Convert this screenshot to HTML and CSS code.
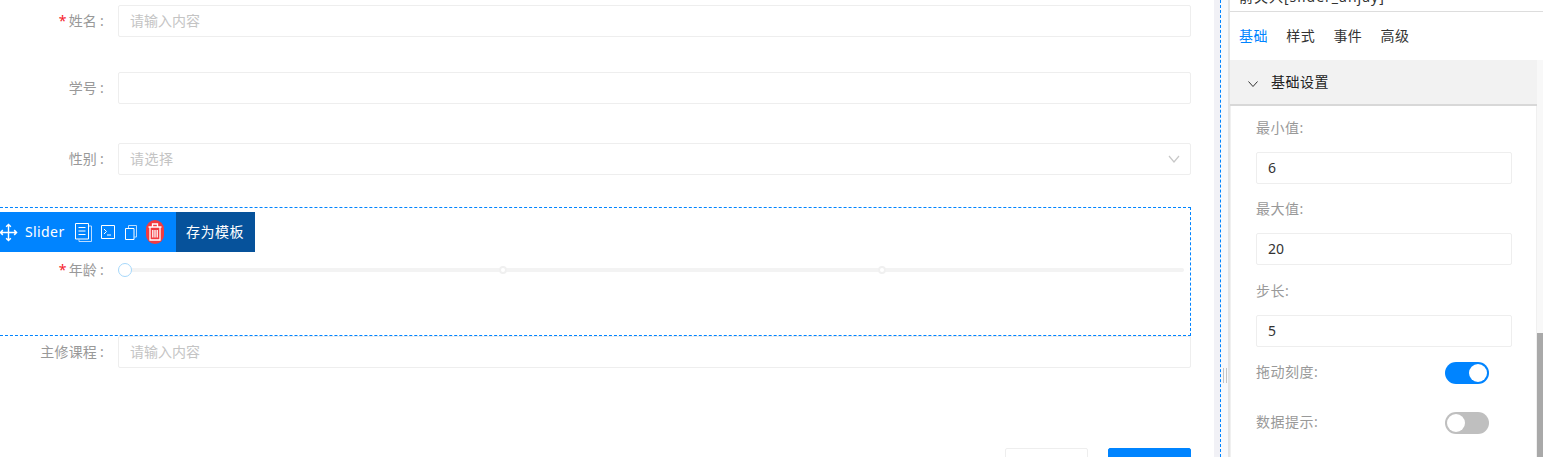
FILE: index.html
```html
<!DOCTYPE html>
<html lang="zh-CN">
<head>
  <meta charset="UTF-8" />
  <title>表单设计</title>
  <link rel="stylesheet" href="styles.css">
</head>
<body>

  <!-- Form canvas -->
  <div class="canvas">
    <div class="row row-name">
      <label class="label"><span class="star">*</span>姓名<span class="colon">:</span></label>
      <input class="input" placeholder="请输入内容">
    </div>
    <div class="row row-number">
      <label class="label">学号<span class="colon">:</span></label>
      <input class="input">
    </div>
    <div class="row row-gender">
      <label class="label">性别<span class="colon">:</span></label>
      <div class="select">
        <span>请选择</span>
        <svg class="chevron" width="12" height="8" viewBox="0 0 12 8"><path d="M1 1l5 6 5-6" fill="none" stroke="#c8c8c8" stroke-width="1.2"/></svg>
      </div>
    </div>

    <div class="selected">
      <div class="toolbar">
        <div class="tools">
          <svg class="tool-move" width="19" height="19" viewBox="0 0 20 20" fill="none" stroke="#fff" stroke-width="1.5">
            <path d="M10 1.5v17M1.5 10h17M7.500 4L10 1.500 12.500 4M7.500 16l2.500 2.500 2.500-2.500M4 7.500L1.500 10 4 12.500M16 7.500l2.500 2.500-2.500 2.500"/>
          </svg>
          <span class="tool-name">Slider</span>
          <svg class="tool-doc" width="17" height="19" viewBox="0 0 17 19" fill="none" stroke="#fff">
            <path d="M13.500 3h3v15.500H4v-2" stroke="#bcdcff"/>
            <path d="M.5.5h13v15.500H.5zM3.500 4.500h7M3.500 8h7M3.500 11.500h7"/>
          </svg>
          <svg class="tool-term" width="14" height="14" viewBox="0 0 14 14" fill="none" stroke="#fff">
            <path d="M.5.5h13v13H.5zM3 4l2.500 2.500L3 9M6 10h4"/>
          </svg>
          <svg class="tool-copy" width="12" height="15" viewBox="0 0 12 15" fill="none" stroke="#fff">
            <path d="M3.500 3V.5h8V12h-2" stroke="#bcdcff"/>
            <path d="M.5 3.500h8.500v11H.5z"/>
          </svg>
          <svg class="tool-trash" width="18" height="24" viewBox="0 0 18 24">
            <rect width="18" height="24" rx="9" fill="#f23b40"/>
            <path d="M2.500 7h13M6.500 7V4h5v3M4 7.500V20h10V7.500M6.800 10v7.500M9 10v7.500M11.200 10v7.500" fill="none" stroke="#fff" stroke-width="1.300"/>
          </svg>
        </div>
        <div class="save-tpl">存为模板</div>
      </div>
      <div class="row">
        <label class="label"><span class="star">*</span>年龄<span class="colon">:</span></label>
        <div class="slider">
          <div class="rail"></div>
          <span class="dot dot-one"></span>
          <span class="dot dot-two"></span>
          <span class="handle"></span>
        </div>
      </div>
    </div>

    <div class="row">
      <label class="label">主修课程<span class="colon">:</span></label>
      <input class="input" placeholder="请输入内容">
    </div>

    <div class="actions">
      <button class="btn"></button>
      <button class="btn btn-primary"></button>
    </div>
  </div>

  <!-- Drag gutter -->
  <div class="gutter">
    <div class="gutter-line">
      <span class="grip"></span>
    </div>
  </div>

  <!-- Settings panel -->
  <div class="panel">
    <div class="panel-title"><span>前关入[slider_anjay]</span></div>
    <div class="tabs">
      <span class="tab active">基础</span>
      <span class="tab">样式</span>
      <span class="tab">事件</span>
      <span class="tab">高级</span>
    </div>
    <div class="settings">
      <div class="settings-main">
        <div class="group-head">
          <svg width="10" height="6" viewBox="0 0 10 6"><path d="M.5.5L5 5.500 9.500.5" fill="none" stroke="#333" stroke-width="1"/></svg>
          <span>基础设置</span>
        </div>
        <div class="group-body">
          <div class="field">
            <div class="field-label">最小值:</div>
            <input class="field-input" value="6">
          </div>
          <div class="field">
            <div class="field-label">最大值:</div>
            <input class="field-input" value="20">
          </div>
          <div class="field field-step">
            <div class="field-label">步长:</div>
            <input class="field-input" value="5">
          </div>
          <div class="switch-row switch-row-first">
            <span class="field-label">拖动刻度:</span>
            <span class="switch on"></span>
          </div>
          <div class="switch-row">
            <span class="field-label">数据提示:</span>
            <span class="switch"></span>
          </div>
        </div>
      </div>
      <div class="scroll-track"><div class="scroll-thumb"></div></div>
    </div>
  </div>

</body>
</html>
```

FILE: styles.css
```css
* {
  box-sizing: border-box;
}
html, body {
  margin: 0;
  padding: 0;
  height: 457px;
  overflow: hidden;
  background-color: #fff;
  font-family: "Noto Sans", "Noto Sans CJK SC", sans-serif;
  font-size: 14px;
}
body {
  display: flex;
}

/* Form canvas */
.canvas {
  width: 1214px;
  height: 457px;
  flex: none;
  padding: 5px 23px 0 0;
  overflow: hidden;
}
.row {
  display: flex;
  align-items: center;
  height: 32px;
}
.row-name {
  margin-bottom: 35px;
}
.row-number {
  margin-bottom: 39px;
}
.row-gender {
  margin-bottom: 32px;
}
.label {
  width: 118px;
  flex: none;
  padding: 0 14px 2px 0;
  text-align: right;
  color: #999;
  letter-spacing: 0.2px;
}
.star {
  color: #f5222d;
  margin-right: 2px;
}
.colon {
  margin-left: 3px;
}
.input,
.select {
  flex: 1;
  height: 32px;
  min-width: 0;
  padding: 0 11px 2px;
  border: 1px solid #eee;
  border-radius: 2px;
  font: inherit;
  outline: none;
  background: #fff;
}
.input::placeholder {
  color: #c4c4c4;
}
.select {
  display: flex;
  align-items: center;
  justify-content: space-between;
  padding-bottom: 3px;
  color: #c4c4c4;
  letter-spacing: 0.5px;
}
.chevron {
  margin: 2px -1px 0 0;
}

/* Selected slider item */
.selected {
  position: relative;
  height: 129px;
  margin-left: -10px;
  padding: 46px 0 0 10px;
  border: 1px dashed #0084ff;
}
.selected .label {
  width: 117px;
}
.toolbar {
  position: absolute;
  top: 4px;
  left: -1px;
  display: flex;
  height: 40px;
  color: #fff;
}
.tools {
  display: flex;
  align-items: center;
  width: 186px;
  padding-left: 9px;
  background-color: #0084ff;
}
.tool-name {
  margin: 0 10px 2px 7px;
  letter-spacing: 0.4px;
}
.tool-term {
  margin-left: 9px;
}
.tool-copy {
  margin-left: 10px;
}
.tool-trash {
  margin-left: 9px;
}
.save-tpl {
  display: flex;
  align-items: center;
  padding: 0 11px 2px 10px;
  background-color: #06529b;
  letter-spacing: 0.5px;
}
.slider {
  position: relative;
  flex: 1;
  height: 32px;
  margin-right: 6px;
}
.rail {
  position: absolute;
  top: 14px;
  left: 0;
  right: 0;
  height: 4px;
  border-radius: 2px;
  background-color: #f3f3f3;
}
.dot,
.handle {
  position: absolute;
  border-radius: 50%;
  background-color: #fff;
}
.dot {
  top: 12px;
  width: 8px;
  height: 8px;
  border: 2px solid #f0f0f0;
}
.dot-one {
  left: 381px;
}
.dot-two {
  left: 760px;
}
.handle {
  top: 9px;
  left: 0;
  width: 14px;
  height: 14px;
  border: 1.5px solid #a6d8fb;
}

/* Form buttons */
.actions {
  display: flex;
  justify-content: flex-end;
  gap: 20px;
  height: 9px;
  margin-top: 80px;
  overflow: hidden;
}
.btn {
  width: 83px;
  height: 32px;
  flex: none;
  border: 1px solid #eee;
  border-radius: 2px;
  background-color: #fff;
}
.btn-primary {
  border-color: #0084ff;
  background-color: #0084ff;
}

/* Drag gutter */
.gutter {
  width: 16px;
  flex: none;
  padding-left: 6px;
  background-color: #f1f1f6;
}
.gutter-line {
  display: flex;
  align-items: flex-start;
  height: 100%;
  padding: 368px 0 0 2px;
  border-left: 1px dashed #0084ff;
  border-right: 2px solid #e4e4e4;
  background-color: #f8f9fc;
}
.grip {
  width: 4px;
  height: 15px;
  border-left: 1px solid #c4c4c4;
  border-right: 1px solid #c4c4c4;
}

/* Settings panel */
.panel {
  flex: 1;
  display: flex;
  flex-direction: column;
  min-width: 0;
  height: 457px;
}
.panel-title {
  display: flex;
  align-items: flex-end;
  flex: none;
  height: 12px;
  padding: 0 0 4px 9px;
  border-bottom: 1px solid #ddd;
  overflow: hidden;
  color: #333;
  line-height: 20px;
  letter-spacing: 1px;
  white-space: nowrap;
}
.tabs {
  display: flex;
  align-items: center;
  flex: none;
  gap: 18.2px;
  height: 48px;
  padding: 0 0 2px 9px;
}
.tab {
  color: #333;
  letter-spacing: 0.5px;
}
.tab.active {
  color: #0084ff;
}
.settings {
  display: flex;
  flex: 1;
  min-height: 0;
}
.settings-main {
  display: flex;
  flex-direction: column;
  flex: 1;
  min-width: 0;
}
.group-head {
  display: flex;
  align-items: center;
  flex: none;
  gap: 13px;
  height: 46px;
  padding: 0 0 2px 18px;
  border-bottom: 2px solid #d8d8d8;
  background-color: #f2f2f2;
  color: #222;
  letter-spacing: 0.5px;
}
.group-head svg {
  margin-top: 5px;
}
.group-body {
  flex: 1;
  min-height: 0;
  overflow: hidden;
  padding: 12px 0 0 25px;
  border-left: 1px solid #f0f0f0;
  border-right: 1px solid #f0f0f0;
}
.field {
  width: 256px;
  margin-bottom: 15px;
}
.field-step {
  margin-top: 16px;
}
.field-label {
  color: #999;
  line-height: 20px;
  letter-spacing: 0.5px;
}
.field-input {
  display: block;
  width: 100%;
  height: 32px;
  margin-top: 14px;
  padding: 0 11px 2px;
  border: 1px solid #eee;
  border-radius: 2px;
  font: inherit;
  color: #333;
  outline: none;
}
.switch-row {
  display: flex;
  align-items: center;
  justify-content: space-between;
  width: 233px;
  height: 22px;
  margin-bottom: 28px;
}
.switch-row .field-label {
  margin-bottom: 2px;
}
.switch-row-first {
  margin-top: 15px;
}
.switch {
  position: relative;
  width: 44px;
  height: 22px;
  border-radius: 11px;
  background-color: #bfbfbf;
}
.switch::after {
  content: "";
  position: absolute;
  top: 2px;
  left: 2px;
  width: 18px;
  height: 18px;
  border-radius: 50%;
  background-color: #fff;
}
.switch.on {
  background-color: #0084ff;
}
.switch.on::after {
  left: 24px;
}
.scroll-track {
  width: 6px;
  flex: none;
  background-color: #f8f8f8;
}
.scroll-thumb {
  height: 124px;
  margin-top: 273px;
  background-color: #a9a9a9;
}
```
